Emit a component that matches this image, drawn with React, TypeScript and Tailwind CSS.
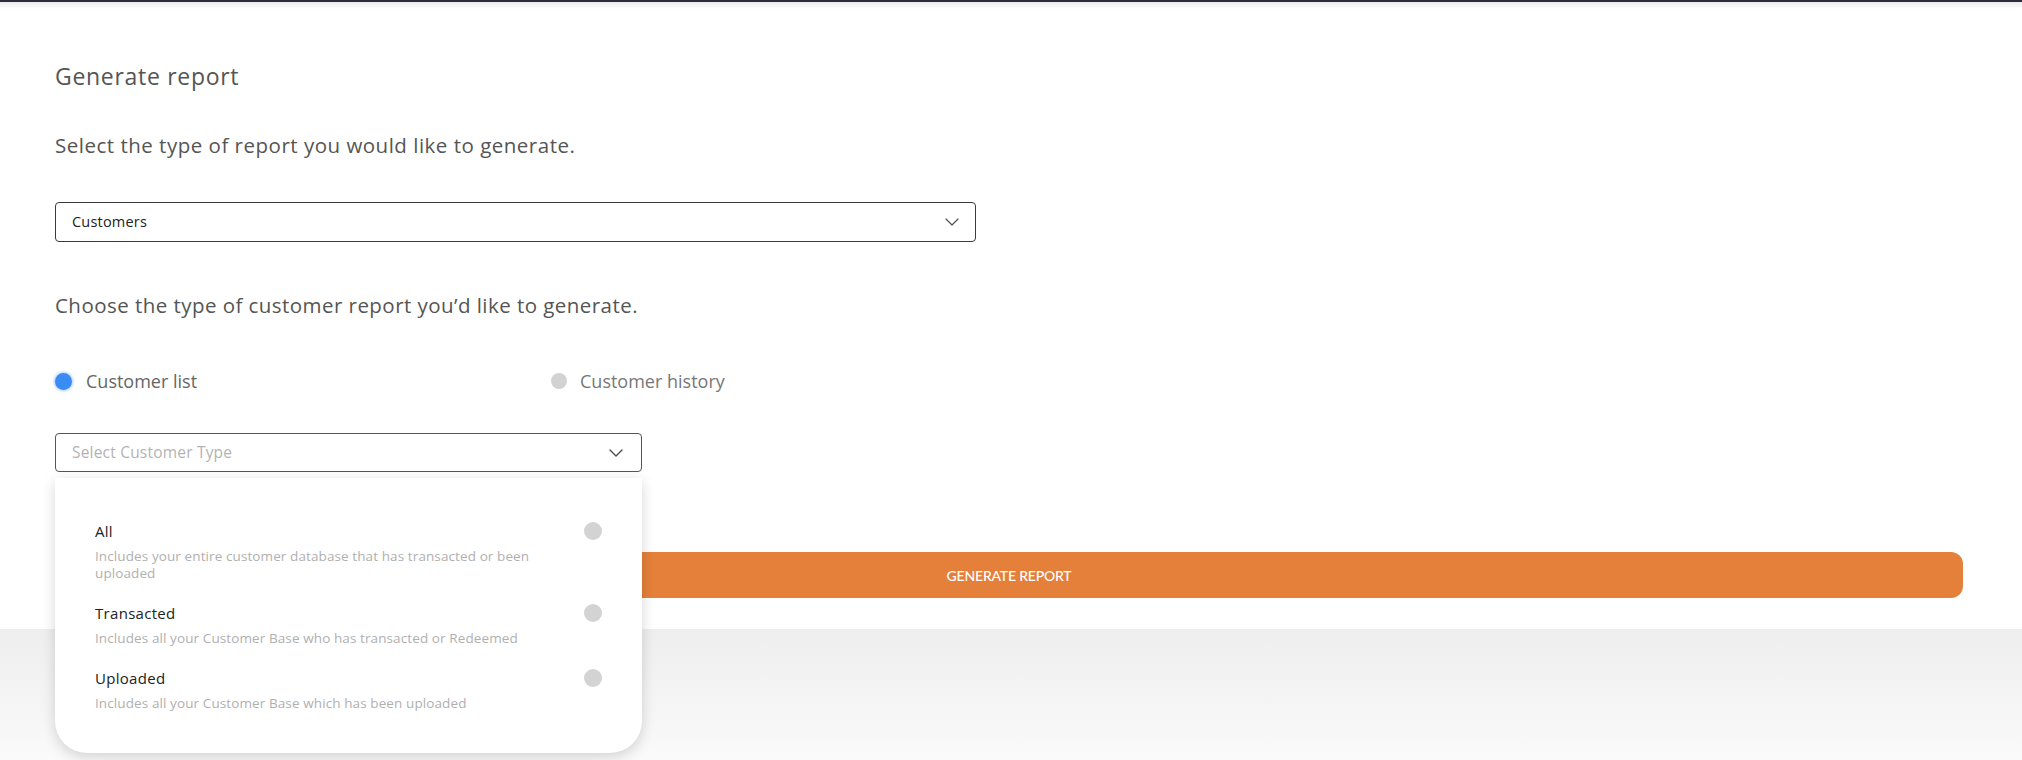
import React, { useState } from 'react';

const FONT = { fontFamily: '"Open Sans", "Noto Sans", sans-serif' };
const BUTTON_FONT = { fontFamily: 'Lato, "Noto Sans", sans-serif' };

type CustomerType = {
  id: string;
  label: string;
  description: string;
};

const CUSTOMER_TYPES: CustomerType[] = [
  {
    id: 'all',
    label: 'All',
    description: 'Includes your entire customer database that has transacted or been uploaded',
  },
  {
    id: 'transacted',
    label: 'Transacted',
    description: 'Includes all your Customer Base who has transacted or Redeemed',
  },
  {
    id: 'uploaded',
    label: 'Uploaded',
    description: 'Includes all your Customer Base which has been uploaded',
  },
];

function Chevron({ className = '' }: { className?: string }) {
  return (
    <svg viewBox="0 0 14 8" className={className} fill="none" stroke="currentColor" strokeWidth="1.3">
      <polyline points="1,1 7,7 13,1" strokeLinecap="round" strokeLinejoin="round" />
    </svg>
  );
}

export default function App() {
  const [reportKind, setReportKind] = useState<'list' | 'history'>('list');
  const [customerType, setCustomerType] = useState<string | null>(null);

  return (
    <div className="relative w-full h-[760px] overflow-hidden bg-white" style={FONT}>
      {/* top header edge */}
      <div className="h-[2px] bg-[#2c2a3b]" />
      <div className="h-[7px] bg-gradient-to-b from-[#ebebee] to-white" />

      {/* card */}
      <div className="bg-white pl-[55px] pr-[59px] pt-[53px] pb-[31px]">
        <h2 className="text-[23px] leading-[28px] tracking-[0.7px] text-[#555555]">Generate report</h2>

        <p className="mt-[41px] text-[20.5px] leading-[28px] tracking-[0.5px] text-[#555555]">
          Select the type of report you would like to generate.
        </p>

        <div className="mt-[43px] w-[921px] h-[40px] flex items-center justify-between pl-4 pr-4 rounded-[4px] border-[1.5px] border-[#3a3a3a]">
          <span className="text-[14.5px] tracking-[0.2px] text-[#222222]">Customers</span>
          <Chevron className="w-[14px] h-[8px] text-[#555555]" />
        </div>

        <p className="mt-[49px] text-[20.5px] leading-[28px] tracking-[0.45px] text-[#555555]">
          Choose the type of customer report you’d like to generate.
        </p>

        <div className="mt-[48px] h-[28px] flex items-center">
          <button
            className="w-[496px] flex items-center gap-[14px] text-left"
            onClick={() => setReportKind('list')}
          >
            <span
              className={`w-[17px] h-[17px] rounded-full ${
                reportKind === 'list' ? 'bg-[#3b8bf4] shadow-[0_0_3px_1px_rgba(59,139,244,0.45)]' : 'bg-[#d2d2d2]'
              }`}
            />
            <span className="text-[18px] text-[#666666]">Customer list</span>
          </button>
          <button className="flex items-center gap-[13px]" onClick={() => setReportKind('history')}>
            <span
              className={`w-[16px] h-[16px] rounded-full ${
                reportKind === 'history' ? 'bg-[#3b8bf4] shadow-[0_0_3px_1px_rgba(59,139,244,0.45)]' : 'bg-[#d2d2d2]'
              }`}
            />
            <span className="text-[18px] text-[#777777]">Customer history</span>
          </button>
        </div>

        <div className="relative mt-[38px] w-[587px]">
          <div className="h-[39px] flex items-center justify-between pl-4 pr-[18px] rounded-[4px] border border-[#555555]">
            <span className="text-[15.5px] tracking-[0.2px] text-[#b3b3b3]">Select Customer Type</span>
            <Chevron className="w-[14px] h-[8px] text-[#444444]" />
          </div>

          {/* open dropdown */}
          <div className="absolute z-10 left-0 top-[45px] w-[587px] h-[275px] bg-white rounded-b-[32px] shadow-[0_4px_14px_rgba(0,0,0,0.16)] pl-10 pr-10 pt-[43px]">
            {CUSTOMER_TYPES.map((t, i) => (
              <div
                key={t.id}
                className={`flex justify-between cursor-pointer ${i > 0 ? 'mt-[21px]' : ''}`}
                onClick={() => setCustomerType(t.id)}
              >
                <div className="w-[480px]">
                  <div className="text-[15px] leading-[20px] tracking-[0.3px] text-[#222222]">{t.label}</div>
                  <div className="mt-[7px] text-[13.5px] leading-[17px] tracking-[0.1px] text-[#b0b0b0]">
                    {t.description}
                  </div>
                </div>
                <span
                  className={`mt-[1px] w-[18px] h-[18px] rounded-full ${
                    customerType === t.id ? 'bg-[#3b8bf4]' : 'bg-[#d3d3d3]'
                  }`}
                />
              </div>
            ))}
          </div>
        </div>

        <button
          className="mt-[80px] w-full h-[46px] rounded-[12px] bg-[#e4803a] text-white text-[14px] font-medium tracking-[-0.2px]"
          style={BUTTON_FONT}
        >
          GENERATE REPORT
        </button>
      </div>

      {/* page background below card */}
      <div className="h-[140px] bg-gradient-to-b from-[#eeeeee] to-[#fbfbfb]" />
    </div>
  );
}
